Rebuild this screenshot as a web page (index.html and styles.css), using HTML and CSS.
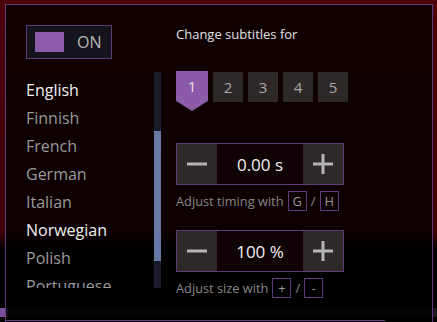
FILE: index.html
```html
<!DOCTYPE html>
<html lang="en">
    <head>
        <meta name="viewport" content="width=device-width, initial-scale=1">
        <link rel="stylesheet" href="styles.css">
    </head>
    <body>
        <!--The video behind the overlay: just a backdrop and the control bar-->
        <div class="stage">
            <div class="seek"><div class="seek-fill"></div></div>
            <div class="tip-edge"></div>

            <!--Subtitle settings overlay-->
            <div class="panel">
                <div class="side">
                    <div class="toggle">
                        <span class="toggle-knob"></span>
                        <span class="toggle-label">ON</span>
                    </div>

                    <div class="langs">
                        <ul class="lang-list">
                            <li class="lang active">English</li>
                            <li class="lang">Finnish</li>
                            <li class="lang">French</li>
                            <li class="lang">German</li>
                            <li class="lang">Italian</li>
                            <li class="lang active">Norwegian</li>
                            <li class="lang">Polish</li>
                            <li class="lang">Portuguese</li>
                        </ul>
                        <div class="scroll"><div class="scroll-thumb"></div></div>
                    </div>
                </div>

                <div class="main">
                    <div class="title">Change subtitles for</div>

                    <div class="tabs">
                        <div class="tab selected">1</div>
                        <div class="tab">2</div>
                        <div class="tab">3</div>
                        <div class="tab">4</div>
                        <div class="tab">5</div>
                    </div>

                    <div class="stepper">
                        <button class="step-btn" aria-label="minus">
                            <svg width="20" height="20" viewBox="0 0 20 20"><path d="M0 10H20" /></svg>
                        </button>
                        <div class="step-value">0.00 s</div>
                        <button class="step-btn" aria-label="plus">
                            <svg width="20" height="20" viewBox="0 0 20 20"><path d="M0 10H20M10 0V20" /></svg>
                        </button>
                    </div>
                    <div class="hint">Adjust timing with <span class="key">G</span> / <span class="key">H</span></div>

                    <div class="stepper">
                        <button class="step-btn" aria-label="minus">
                            <svg width="20" height="20" viewBox="0 0 20 20"><path d="M0 10H20" /></svg>
                        </button>
                        <div class="step-value">100 %</div>
                        <button class="step-btn" aria-label="plus">
                            <svg width="20" height="20" viewBox="0 0 20 20"><path d="M0 10H20M10 0V20" /></svg>
                        </button>
                    </div>
                    <div class="hint">Adjust size with <span class="key">+</span> / <span class="key">-</span></div>
                </div>
            </div>
        </div>
    </body>
</html>
```

FILE: styles.css
```css
html {box-sizing: border-box;}
*, *:before, *:after {
    box-sizing: inherit;
}

body {
    margin: 0;
    font-family: "Open Sans", "Noto Sans", sans-serif;
    overflow: hidden;
}

/*The video frame behind everything*/
.stage {
    position: relative;
    width: 437px;
    height: 322px;
    overflow: hidden;
    background: linear-gradient(to bottom, #4c0309 0px, #3e0207 232px, #000 250px, #000 100%);
}

.seek {
    position: absolute;
    left: 0;
    right: 0;
    top: 308px;
    height: 9px;
    background-color: #1c1621;
}

.seek-fill {
    width: 8px;
    height: 100%;
    background-color: #7d4c9b;
}

.tip-edge {
    position: absolute;
    left: 5px;
    top: 320px;
    width: 380px;
    height: 2px;
    border-top: 1px solid #6a4184;
    z-index: 2;
}

/*The overlay panel*/
.panel {
    position: absolute;
    top: 4px;
    left: 5px;
    width: 428px;
    height: 340px;
    border: 1px solid #5d3a78;
    background-color: rgba(0, 0, 0, 0.78);
    display: flex;
    padding: 20px 0 0 20px;
    z-index: 1;
}

.side {
    width: 135px;
    display: flex;
    flex-direction: column;
}

.toggle {
    width: 86px;
    height: 34px;
    border: 1px solid #5d3a78;
    background-color: #15131c;
    display: flex;
    align-items: center;
    padding-left: 8px;
}

.toggle-knob {
    width: 29px;
    height: 20px;
    background-color: #8a5ca9;
}

.toggle-label {
    margin-left: 13px;
    color: #b9b9b9;
    font-size: 16px;
}

.langs {
    margin-top: 13px;
    height: 216px;
    display: flex;
}

.lang-list {
    list-style: none;
    margin: 0;
    padding: 4px 0 0 0;
    width: 128px;
    overflow: hidden;
}

.lang {
    height: 28px;
    line-height: 28px;
    font-size: 16px;
    color: #9a9a9a;
    white-space: nowrap;
}

.lang.active {
    color: #f0f0f0;
}

.scroll {
    width: 7px;
    height: 216px;
    background-color: #1b1b2b;
    padding-top: 59px;
}

.scroll-thumb {
    height: 130px;
    background-color: #6878a6;
}

.main {
    margin-left: 15px;
    display: flex;
    flex-direction: column;
}

.title {
    color: #e2e2e2;
    font-size: 13px;
    line-height: 17px;
    margin-top: 1px;
}

.tabs {
    margin-top: 28px;
    display: flex;
    gap: 5px;
    height: 40px;
}

.tab {
    width: 30px;
    height: 30px;
    margin-top: 1px;
    background-color: #2e2828;
    color: #a8a8a8;
    font-size: 15px;
    display: flex;
    align-items: center;
    justify-content: center;
}

.tab.selected {
    width: 32px;
    height: 40px;
    margin-top: 0;
    padding-bottom: 10px;
    background-color: #8b5aa9;
    color: #e8e8e8;
    clip-path: polygon(0 0, 100% 0, 100% 30px, 50% 100%, 0 30px);
}

.stepper {
    margin-top: 32px;
    width: 168px;
    height: 42px;
    border: 1px solid #5d3a78;
    display: flex;
}

.hint + .stepper {
    margin-top: 19px;
}

.step-btn {
    width: 40px;
    border: none;
    padding: 0;
    background-color: #2e2828;
    display: flex;
    align-items: center;
    justify-content: center;
}

.step-btn svg {
    stroke: #b4b4b4;
    stroke-width: 3;
    fill: none;
}

.step-value {
    flex: 1;
    background-color: #0f0306;
    color: #f0f0f0;
    font-size: 17px;
    display: flex;
    align-items: center;
    justify-content: center;
}

.hint {
    margin-top: 5px;
    color: #888;
    font-size: 12.8px;
    display: flex;
    align-items: center;
    gap: 4px;
    height: 21px;
}

.key {
    border: 1px solid #5d3a78;
    color: #999;
    height: 20px;
    min-width: 19px;
    padding: 0 4px;
    display: flex;
    align-items: center;
    justify-content: center;
}
```
